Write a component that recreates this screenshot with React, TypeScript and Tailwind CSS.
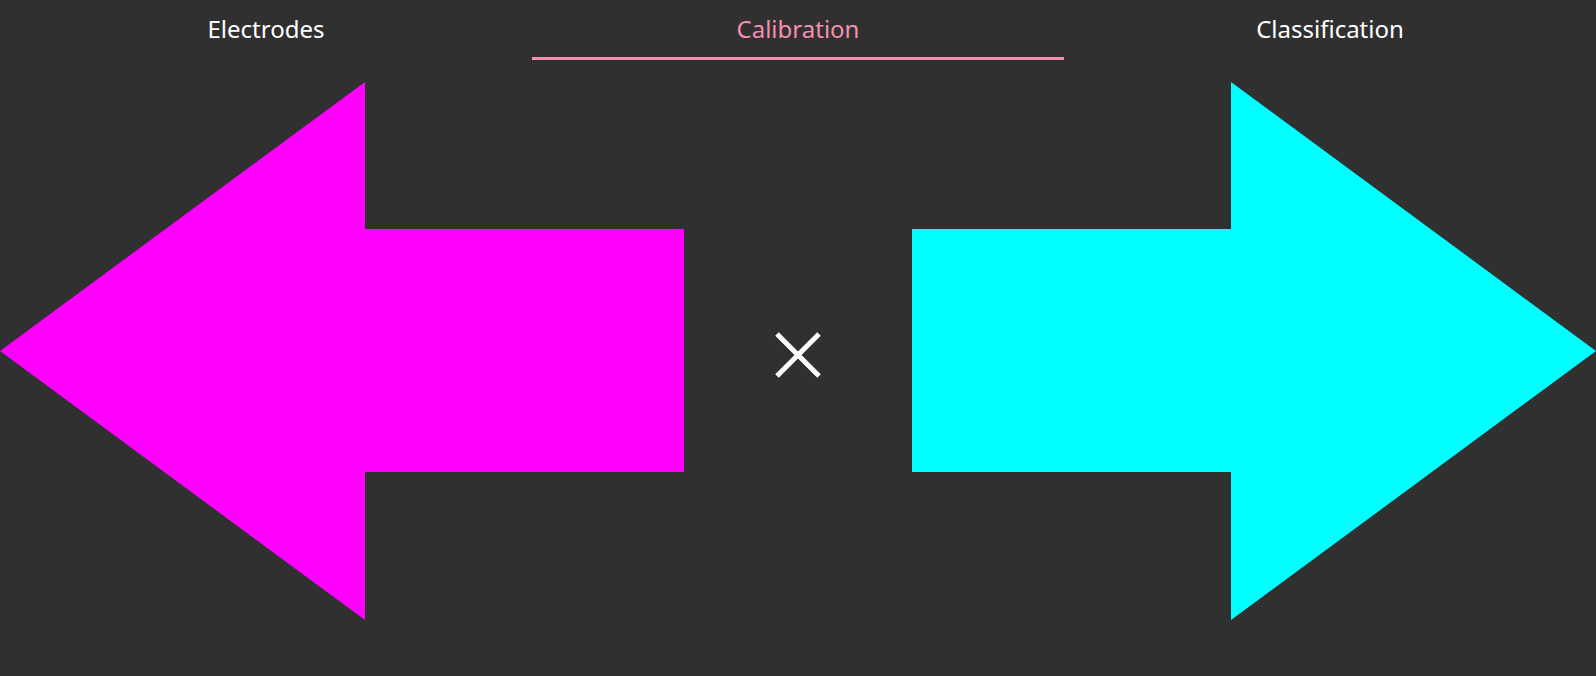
import { useState } from "react";

const tabs = ["Electrodes", "Calibration", "Classification"];

function Arrow({ dir, color }: { dir: "left" | "right"; color: string }) {
  const pts =
    dir === "left"
      ? "0,269 365,0 365,147 684,147 684,390 365,390 365,538"
      : "684,269 319,0 319,147 0,147 0,390 319,390 319,538";
  return (
    <svg width="684" height="538" viewBox="0 0 684 538" className="shrink-0 block">
      <polygon points={pts} fill={color} />
    </svg>
  );
}

export default function App() {
  const [active, setActive] = useState(1);

  return (
    <div className="w-[1596px] h-[676px] bg-[#303030] overflow-hidden" style={{ fontFamily: '"Noto Sans", "Open Sans", sans-serif' }}>
      {/* Tabs */}
      <div className="grid grid-cols-3 h-[60px]">
        {tabs.map((t, i) => (
          <button
            key={t}
            onClick={() => setActive(i)}
            className={
              "relative flex items-center justify-center text-[24px] pb-[3px] " +
              (active === i ? "text-[#f48fb1]" : "text-white")
            }
          >
            {t}
            {active === i && <span className="absolute left-0 right-0 bottom-0 h-[3px] bg-[#f48fb1]" />}
          </button>
        ))}
      </div>

      {/* Direction cue */}
      <div className="flex items-center justify-between pt-[22px]">
        <Arrow dir="left" color="#ff00ff" />
        <div className="flex-1 flex items-center justify-center mt-2">
          <svg width="46" height="46" viewBox="0 0 46 46">
            <path d="M2 2 L44 44 M44 2 L2 44" stroke="white" strokeWidth="5" />
          </svg>
        </div>
        <Arrow dir="right" color="#00ffff" />
      </div>
    </div>
  );
}
